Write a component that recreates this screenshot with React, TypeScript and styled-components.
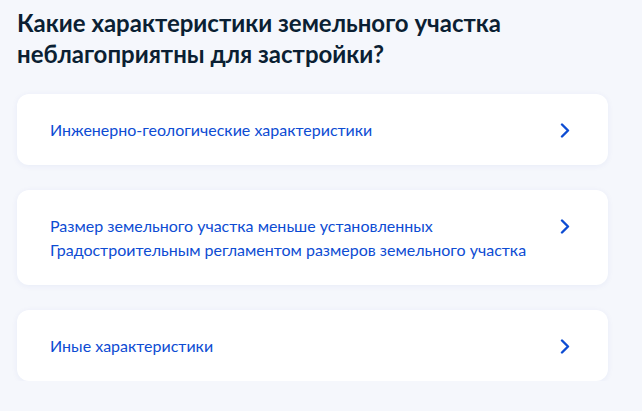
import React from 'react';
import styled, { createGlobalStyle } from 'styled-components';

const GlobalStyle = createGlobalStyle`
  html, body {
    margin: 0;
    padding: 0;
    background: #f5f7fc;
  }
  body {
    font-family: Lato, 'Noto Sans', sans-serif;
  }
`;

const Wrapper = styled.div`
  padding: 7px 34px 0 17px;
  width: 591px;
`;

const Title = styled.h1`
  font: 700 24px/31px Lato, 'Noto Sans', sans-serif;
  color: #0b1f33;
  margin: 0 0 25px;
`;

const List = styled.div`
  display: flex;
  flex-direction: column;
  gap: 25px;
`;

const Card = styled.a`
  display: flex;
  align-items: flex-start;
  justify-content: space-between;
  background: #fff;
  border-radius: 12px;
  box-shadow: 0 1px 6px rgba(0, 56, 170, 0.06);
  padding: 24px 38px 23px 33px;
  text-decoration: none;
  cursor: pointer;
`;

const Label = styled.span`
  font: 400 16px/24px Lato, 'Noto Sans', sans-serif;
  color: #0d4cd3;
  max-width: 500px;
`;

const Arrow = styled.svg`
  flex: none;
  margin-top: 5px;
  width: 10px;
  height: 15px;
`;

const Chevron: React.FC = () => (
  <Arrow viewBox="0 0 10 15" fill="none">
    <path d="M2 1.5L8 7.5L2 13.5" stroke="#0d4cd3" strokeWidth="2.4" strokeLinecap="round" strokeLinejoin="round" />
  </Arrow>
);

const items = [
  'Инженерно-геологические характеристики',
  'Размер земельного участка меньше установленных Градостроительным регламентом размеров земельного участка',
  'Иные характеристики',
];

const App: React.FC = () => {
  return (
    <Wrapper>
      <GlobalStyle />
      <Title>
        Какие характеристики земельного участка
        <br />
        неблагоприятны для застройки?
      </Title>
      <List>
        {items.map((text) => (
          <Card key={text}>
            <Label>{text}</Label>
            <Chevron />
          </Card>
        ))}
      </List>
    </Wrapper>
  );
};

export default App;
